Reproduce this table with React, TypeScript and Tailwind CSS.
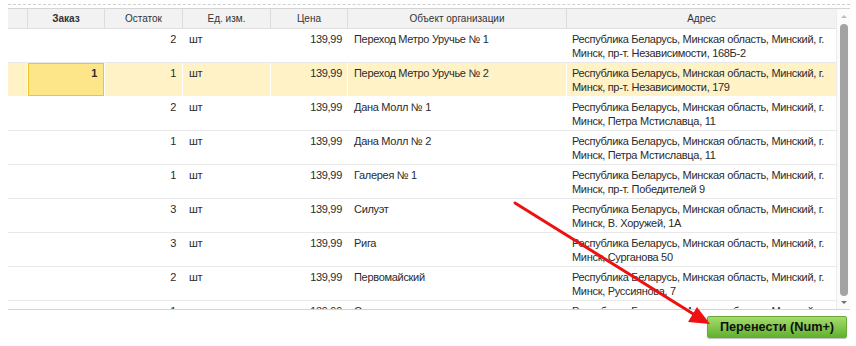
import React from 'react';

interface Row {
  order?: string;
  stock: number;
  price: string;
  name: string;
  address: string;
}

const rows: Row[] = [
  { stock: 2, price: '139,99', name: 'Переход Метро Уручье № 1', address: 'Республика Беларусь, Минская область, Минский, г. Минск, пр-т. Независимости, 168Б-2' },
  { order: '1', stock: 1, price: '139,99', name: 'Переход Метро Уручье № 2', address: 'Республика Беларусь, Минская область, Минский, г. Минск, пр-т. Независимости, 179' },
  { stock: 2, price: '139,99', name: 'Дана Молл № 1', address: 'Республика Беларусь, Минская область, Минский, г. Минск, Петра Мстиславца, 11' },
  { stock: 1, price: '139,99', name: 'Дана Молл № 2', address: 'Республика Беларусь, Минская область, Минский, г. Минск, Петра Мстиславца, 11' },
  { stock: 1, price: '139,99', name: 'Галерея № 1', address: 'Республика Беларусь, Минская область, Минский, г. Минск, пр-т. Победителей 9' },
  { stock: 3, price: '139,99', name: 'Силуэт', address: 'Республика Беларусь, Минская область, Минский, г. Минск, В. Хоружей, 1А' },
  { stock: 3, price: '139,99', name: 'Рига', address: 'Республика Беларусь, Минская область, Минский, г. Минск, Сурганова 50' },
  { stock: 2, price: '139,99', name: 'Первомайский', address: 'Республика Беларусь, Минская область, Минский, г. Минск, Руссиянова, 7' },
  { stock: 1, price: '139,99', name: 'Скала', address: 'Республика Беларусь, Минская область, Минский, г. Минск, Притыцкого, 29' },
];

const cols = 'grid grid-cols-[20px_77px_78px_88px_77px_219px_269px]';

export default function App() {
  return (
    <div className="relative w-[856px] h-[346px] bg-white overflow-hidden text-[#2b2b2b] font-['Liberation_Sans',Arial,sans-serif]">
      <div className="ml-2 mr-[6px] mt-1 border-t border-dashed border-[#cfcfcf]" />

      <div className="ml-2 mr-[6px] mt-[3px] h-[302px] flex border-t border-b border-[#d4d4d4] overflow-hidden">
        <div className="flex-1 flex flex-col overflow-hidden">
          <div className={`${cols} h-5 bg-[#f2f2f2] border-b border-[#e0e0e0] text-[10px] leading-[19px] text-center text-[#333]`}>
            <div className="border-r border-[#dcdcdc]" />
            <div className="border-r border-[#dcdcdc] font-bold">Заказ</div>
            <div className="border-r border-[#dcdcdc]">Остаток</div>
            <div className="border-r border-[#dcdcdc]">Ед. изм.</div>
            <div className="border-r border-[#dcdcdc]">Цена</div>
            <div className="border-r border-[#dcdcdc]">Объект организации</div>
            <div>Адрес</div>
          </div>

          {rows.map((r, i) => {
            const sel = !!r.order;
            return (
              <div
                key={i}
                className={`${cols} h-[34px] shrink-0 border-b text-[11px] tracking-[-0.3px] leading-[14px] ${sel ? 'bg-[#fff2c6] border-white' : 'bg-white border-[#e8e8e8]'}`}
              >
                <div className="border-r border-white" />
                <div className="border-r border-white">
                  {sel && (
                    <div className="h-full bg-[#fde58a] border border-[#f2c42c] text-right font-bold pr-[6px] pt-[2px]">
                      {r.order}
                    </div>
                  )}
                </div>
                <div className="border-r border-white text-right pr-[6px] pt-[3px]">{r.stock}</div>
                <div className="border-r border-white pl-[6px] pt-[3px]">шт</div>
                <div className="border-r border-white text-right pr-[5px] pt-[3px]">{r.price}</div>
                <div className="border-r border-white pl-[6px] pt-[3px]">{r.name}</div>
                <div className="pl-[5px] pr-2 pt-[3px]">{r.address}</div>
              </div>
            );
          })}
        </div>

        <div className="w-[14px] flex flex-col items-center bg-[#fbfbfb] border-l border-[#ececec]">
          <div className="mt-[6px] w-0 h-0 border-l-[3px] border-r-[3px] border-b-[3px] border-transparent border-b-[#bdbdbd]" />
          <div className="mt-[6px] w-2 h-[272px] rounded-[4px] bg-[#a3a3a3]" />
          <div className="mt-[5px] w-0 h-0 border-l-[3px] border-r-[3px] border-t-[3px] border-transparent border-t-[#707070]" />
        </div>
      </div>

      <div className="flex justify-end mr-[9px] mt-[6px]">
        <button className="w-[140px] h-[22px] rounded-[2px] border border-[#6aa83a] bg-gradient-to-b from-[#a5dc6a] to-[#62b12e] text-[12.7px] font-bold text-[#111] leading-[20px] shadow-[0_1px_1px_rgba(0,0,0,0.25)]">
          Перенести (Num+)
        </button>
      </div>

      <svg className="absolute left-0 top-0 pointer-events-none" width="856" height="346">
        <line x1="515" y1="203" x2="695" y2="315" stroke="#ee1111" strokeWidth="3" strokeLinecap="round" />
        <polygon points="710,324 688,322 697,307" fill="#ee1111" />
      </svg>
    </div>
  );
}
